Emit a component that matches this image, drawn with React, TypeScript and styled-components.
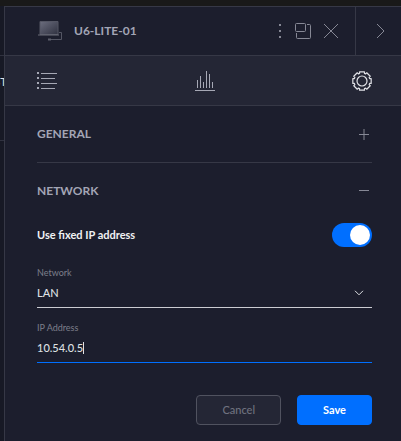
import React, { useState } from 'react';
import styled, { createGlobalStyle } from 'styled-components';

const GlobalStyle = createGlobalStyle`
  * { box-sizing: border-box; }
  body {
    margin: 0;
    background: #1c1e2d;
    color: #dee0e3;
    font-family: Lato, sans-serif;
    font-size: 11px;
    line-height: 16px;
  }
  button, input, select { font: inherit; color: inherit; }
  svg { display: block; }
`;

const Page = styled.div`
  min-height: 100vh;
  display: flex;
  flex-direction: column;
`;

const TopBar = styled.div`
  height: 6px;
  background: #191919;
`;

const Content = styled.div`
  flex: 1;
  display: flex;
`;

const Backdrop = styled.div`
  width: 4px;
  flex: none;
  background: #171925;
`;

const BackdropCell = styled.div<{ $height: number }>`
  height: ${(p) => p.$height}px;
  display: flex;
  justify-content: center;
  padding: 18px 3px 0 0;
  border-bottom: 1px solid #303240;
`;

const Panel = styled.main`
  flex: 1;
  min-width: 0;
  position: relative;
  background: #1c1e2d;
  border-top: 1px solid #363846;
  border-left: 1px solid #363846;
`;

const Header = styled.header`
  height: 49px;
  display: flex;
  align-items: center;
  padding-left: 32px;
  border-bottom: 1px solid #363846;
`;

const Title = styled.h1`
  flex: 1;
  margin: 0 0 0 11px;
  font-size: 12px;
  font-weight: 700;
  color: #a3a5b5;
`;

const IconButton = styled.button`
  padding: 0;
  border: 0;
  background: none;
  color: #868895;
  cursor: pointer;
`;

const HeaderActions = styled.div`
  display: flex;
  align-items: center;
  gap: 12px;
  padding-right: 16px;
`;

const NextButton = styled(IconButton)`
  width: 46px;
  height: 48px;
  display: flex;
  align-items: center;
  justify-content: center;
  padding-left: 4px;
  border-left: 1px solid #363846;
`;

const Tabs = styled.nav`
  height: 50px;
  display: flex;
  align-items: center;
  justify-content: space-between;
  padding: 0 29px 0 32px;
  background: #242635;
  border-bottom: 1px solid #363846;
`;

const TabButton = styled(IconButton)<{ $active?: boolean }>`
  color: ${(p) => (p.$active ? '#e0e1e6' : '#a6a8b5')};
`;

const Body = styled.form`
  padding: 0 29px 15px 32px;
`;

const SectionHeader = styled.button`
  width: 100%;
  height: 56px;
  display: flex;
  align-items: center;
  justify-content: space-between;
  padding: 0 3px 0 0;
  border: 0;
  background: none;
  color: #a3a5b5;
  font-size: 12px;
  font-weight: 700;
`;

const Divider = styled.hr`
  margin: 0;
  border: 0;
  border-top: 1px solid #363846;
`;

const ToggleRow = styled.label`
  height: 24px;
  margin-top: 4px;
  display: flex;
  align-items: center;
  justify-content: space-between;
  font-weight: 700;
  color: #f0f1f3;
`;

const Toggle = styled.input`
  appearance: none;
  width: 40px;
  height: 24px;
  margin: 0;
  padding: 2px;
  border-radius: 12px;
  background: #50525f;
  display: flex;
  &::before {
    content: '';
    width: 20px;
    height: 20px;
    border-radius: 50%;
    background: #fff;
  }
  &:checked { background: #006fff; justify-content: flex-end; }
`;

const Fields = styled.div`
  display: flex;
  flex-direction: column;
  gap: 15px;
  margin-top: 21px;
`;

const Field = styled.div<{ $active?: boolean }>`
  height: 40px;
  display: flex;
  flex-direction: column;
  border-bottom: 1px solid ${(p) => (p.$active ? '#006fff' : '#cbccd2')};
`;

const Label = styled.label`
  font-size: 9px;
  line-height: 10px;
  color: #7c7e8b;
`;

const Control = styled.div`
  flex: 1;
  display: flex;
  align-items: center;
  padding-right: 8px;
  color: #dee0e3;
  font-weight: 500;
`;

const TextInput = styled.input`
  field-sizing: content;
  max-width: 100%;
  height: 20px;
  padding: 0;
  border: 0;
  outline: 0;
  background: none;
  caret-color: transparent;
`;

const Caret = styled.span`
  width: 1px;
  height: 12px;
  background: #dee0e3;
`;

const Select = styled.select`
  flex: 1;
  min-width: 0;
  height: 20px;
  padding: 0;
  border: 0;
  outline: 0;
  appearance: none;
  background: none;
`;

const Actions = styled.div`
  display: flex;
  justify-content: flex-end;
  gap: 16px;
  margin-top: 32px;
`;

const Button = styled.button<{ $primary?: boolean }>`
  height: 30px;
  padding: 0 25px;
  border-radius: 4px;
  border: 1px solid ${(p) => (p.$primary ? '#006fff' : '#50525f')};
  background: ${(p) => (p.$primary ? '#006fff' : '#242635')};
  color: ${(p) => (p.$primary ? '#fff' : '#70727f')};
  font-weight: ${(p) => (p.$primary ? 700 : 500)};
`;

const DeviceIcon = () => (
  <svg width="26" height="20" viewBox="0 0 26 20" fill="none">
    <defs>
      <linearGradient id="screen" x1="0" y1="0" x2="1" y2="1">
        <stop offset="0" stopColor="#6c6e7f" />
        <stop offset="1" stopColor="#2f3140" />
      </linearGradient>
    </defs>
    <path d="M3 .5h18v13H3z" fill="url(#screen)" stroke="#545664" />
    <path d="M1 14h21" stroke="#6b6d79" />
    <path d="M22 11.5h2.500v7H11" stroke="#545664" />
    <path d="M11 18.500h3" stroke="#5d5f6c" strokeWidth="2" />
  </svg>
);

const MoreIcon = () => (
  <svg width="4" height="16" viewBox="0 0 4 16" fill="currentColor">
    <path d="M0 1h2v2H0zM0 7h2v2H0zM0 13h2v2H0z" />
  </svg>
);

const WindowIcon = () => (
  <svg width="16" height="16" viewBox="0 0 16 16" fill="none" stroke="currentColor">
    <rect x=".5" y=".5" width="10" height="8" rx="1" />
    <path d="M12 1.500h2.500q1 0 1 1v12q0 1-1 1h-12q-1 0-1-1V10" />
  </svg>
);

const CloseIcon = () => (
  <svg width="16" height="16" viewBox="0 0 16 16" fill="none" stroke="currentColor">
    <path d="M1 1l14 14M15 1L1 15" />
  </svg>
);

const NextIcon = () => (
  <svg width="9" height="16" viewBox="0 0 9 16" fill="none" stroke="currentColor">
    <path d="M1 1l7 7-7 7" />
  </svg>
);

const ListIcon = () => (
  <svg width="20" height="18" viewBox="0 0 20 18" fill="currentColor">
    <path d="M0 0h2v2H0zM0 5h2v2H0zM0 10h2v2H0zM0 15h2v2H0z" />
    <path d="M4 1h16v1H4zM4 6h14v1H4zM4 11h16v1H4zM4 16h14v1H4z" />
  </svg>
);

const ChartIcon = () => (
  <svg width="20" height="20" viewBox="0 0 20 20" fill="currentColor">
    <path d="M0 19h20v1H0zM2 9h1v8H2zM5 5h1v12H5zM8 11h1v6H8zM11 0h1v17h-1zM14 3h1v14h-1zM17 11h1v6h-1z" />
  </svg>
);

const TEETH = 8;
const gearOutline = Array.from({ length: TEETH * 4 }, (_, i) => {
  const offsets = [-15, 15, 18, 27];
  const radius = i % 4 < 2 ? 9.5 : 8;
  const angle = ((Math.floor(i / 4) * 360) / TEETH + offsets[i % 4]) * (Math.PI / 180);
  return `${10 + radius * Math.sin(angle)},${10 - radius * Math.cos(angle)}`;
}).join(' ');

const GearIcon = () => (
  <svg width="20" height="20" viewBox="0 0 20 20" fill="none" stroke="currentColor" strokeWidth="1.2">
    <circle cx="10" cy="10" r="5" />
    <polygon points={gearOutline} strokeLinejoin="round" />
  </svg>
);

const PlusIcon = () => (
  <svg width="10" height="11" viewBox="0 0 10 11">
    <path d="M4 0h2v11H4z" fill="#50525f" />
    <path d="M0 5h10v1H0z" fill="#868895" />
  </svg>
);

const MinusIcon = () => (
  <svg width="10" height="2" viewBox="0 0 10 2">
    <path d="M0 0h10v1H0z" fill="#868895" />
  </svg>
);

const ChevronDownIcon = () => (
  <svg width="10" height="6" viewBox="0 0 10 6" fill="none" stroke="currentColor">
    <path d="M1 .8l4 4 4-4" />
  </svg>
);

export default function App() {
  const [fixedIp, setFixedIp] = useState(true);
  const [ip, setIp] = useState('10.54.0.5');

  return (
    <Page>
      <GlobalStyle />
      <TopBar />
      <Content>
        <Backdrop>
          <BackdropCell $height={50} />
          <BackdropCell $height={85}>ST</BackdropCell>
        </Backdrop>
        <Panel>
          <Header>
            <DeviceIcon />
            <Title>U6-LITE-01</Title>
            <HeaderActions>
              <IconButton aria-label="More"><MoreIcon /></IconButton>
              <IconButton aria-label="Open in window"><WindowIcon /></IconButton>
              <IconButton aria-label="Close"><CloseIcon /></IconButton>
            </HeaderActions>
            <NextButton aria-label="Next"><NextIcon /></NextButton>
          </Header>
          <Tabs>
            <TabButton aria-label="Details"><ListIcon /></TabButton>
            <TabButton aria-label="Statistics"><ChartIcon /></TabButton>
            <TabButton aria-label="Settings" $active><GearIcon /></TabButton>
          </Tabs>
          <Body onSubmit={(e) => e.preventDefault()}>
            <SectionHeader type="button" aria-expanded={false}>GENERAL<PlusIcon /></SectionHeader>
            <Divider />
            <SectionHeader type="button" aria-expanded>NETWORK<MinusIcon /></SectionHeader>
            <ToggleRow>
              Use fixed IP address
              <Toggle type="checkbox" role="switch" checked={fixedIp} onChange={(e) => setFixedIp(e.target.checked)} />
            </ToggleRow>
            <Fields>
              <Field>
                <Label htmlFor="network">Network</Label>
                <Control>
                  <Select id="network"><option>LAN</option></Select>
                  <ChevronDownIcon />
                </Control>
              </Field>
              <Field $active>
                <Label htmlFor="ip">IP Address</Label>
                <Control>
                  <TextInput id="ip" autoFocus value={ip} onChange={(e) => setIp(e.target.value)} />
                  <Caret />
                </Control>
              </Field>
            </Fields>
            <Actions>
              <Button type="button">Cancel</Button>
              <Button type="submit" $primary>Save</Button>
            </Actions>
          </Body>
        </Panel>
      </Content>
    </Page>
  );
}
